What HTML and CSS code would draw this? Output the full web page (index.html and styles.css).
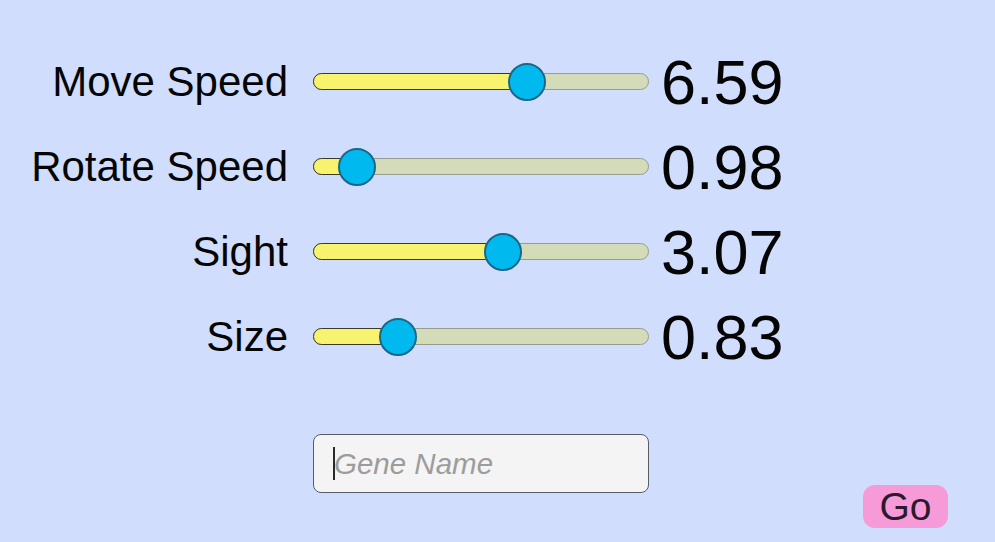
FILE: index.html
```html
<!DOCTYPE html>
<html>
<head>
<meta charset="utf-8">
<link rel="stylesheet" href="styles.css">
</head>
<body>
<main class="panel">
  <div class="row">
    <div class="label">Move Speed</div>
    <div class="track"><div class="fill" style="width:213px"></div><div class="thumb" style="left:194px"></div></div>
    <div class="value">6.59</div>
  </div>
  <div class="row">
    <div class="label">Rotate Speed</div>
    <div class="track"><div class="fill" style="width:43px"></div><div class="thumb" style="left:24px"></div></div>
    <div class="value">0.98</div>
  </div>
  <div class="row">
    <div class="label">Sight</div>
    <div class="track"><div class="fill" style="width:189px"></div><div class="thumb" style="left:170px"></div></div>
    <div class="value">3.07</div>
  </div>
  <div class="row">
    <div class="label">Size</div>
    <div class="track"><div class="fill" style="width:84px"></div><div class="thumb" style="left:65px"></div></div>
    <div class="value">0.83</div>
  </div>
  <div class="row bottom">
    <div></div>
    <label class="field"><span class="caret"></span><input class="name" type="text" placeholder="Gene Name"></label>
    <button class="go">Go</button>
  </div>
</main>
</body>
</html>
```

FILE: styles.css
```css
html, body {
  margin: 0;
  padding: 0;
  width: 995px;
  height: 542px;
  overflow: hidden;
  background: #d0ddfc;
  font-family: "Liberation Sans", Arial, sans-serif;
}
.panel {
  padding-top: 39px;
}
.row {
  display: grid;
  grid-template-columns: 288px 336px 1fr;
  column-gap: 25px;
  height: 85px;
  align-items: center;
}
.label {
  text-align: right;
  font-size: 42px;
  color: #050505;
  white-space: nowrap;
}
.track {
  position: relative;
  height: 17px;
  box-sizing: border-box;
  border: 1px solid #969c8e;
  border-radius: 9px;
  background: #d3dbb8;
}
.fill {
  position: absolute;
  left: -1px;
  top: -1px;
  height: 17px;
  box-sizing: border-box;
  border: 1px solid #3b3a28;
  border-radius: 9px 0 0 9px;
  background: #f7f36e;
}
.thumb {
  position: absolute;
  top: -11px;
  width: 38px;
  height: 38px;
  box-sizing: border-box;
  border: 2px solid #1a6787;
  border-radius: 50%;
  background: #00b9ef;
}
.value {
  margin-left: -13px;
  font-size: 63px;
  color: #050505;
}
.bottom {
  margin-top: 55px;
  height: 94px;
}
.field {
  align-self: start;
  display: flex;
  align-items: center;
  height: 59px;
  box-sizing: border-box;
  border: 1px solid #555d6a;
  border-radius: 8px;
  background: #f4f4f4;
  padding-left: 19px;
}
.caret {
  width: 2px;
  height: 33px;
  background: #2a2a2a;
}
.name {
  flex: 1;
  min-width: 0;
  border: none;
  outline: none;
  background: transparent;
  padding: 0;
  margin-left: -1px;
  font-family: "Liberation Sans", Arial, sans-serif;
  font-size: 29.5px;
  font-style: italic;
  color: #333;
}
.name::placeholder {
  color: #9c9c9c;
  font-style: italic;
}
.go {
  align-self: end;
  justify-self: end;
  margin-right: 47px;
  width: 85px;
  height: 43px;
  border: none;
  border-radius: 12px;
  background: #f79ad8;
  color: #2b1a2b;
  font-family: "Liberation Sans", Arial, sans-serif;
  font-size: 39px;
  padding: 0;
  line-height: 43px;
}
```
